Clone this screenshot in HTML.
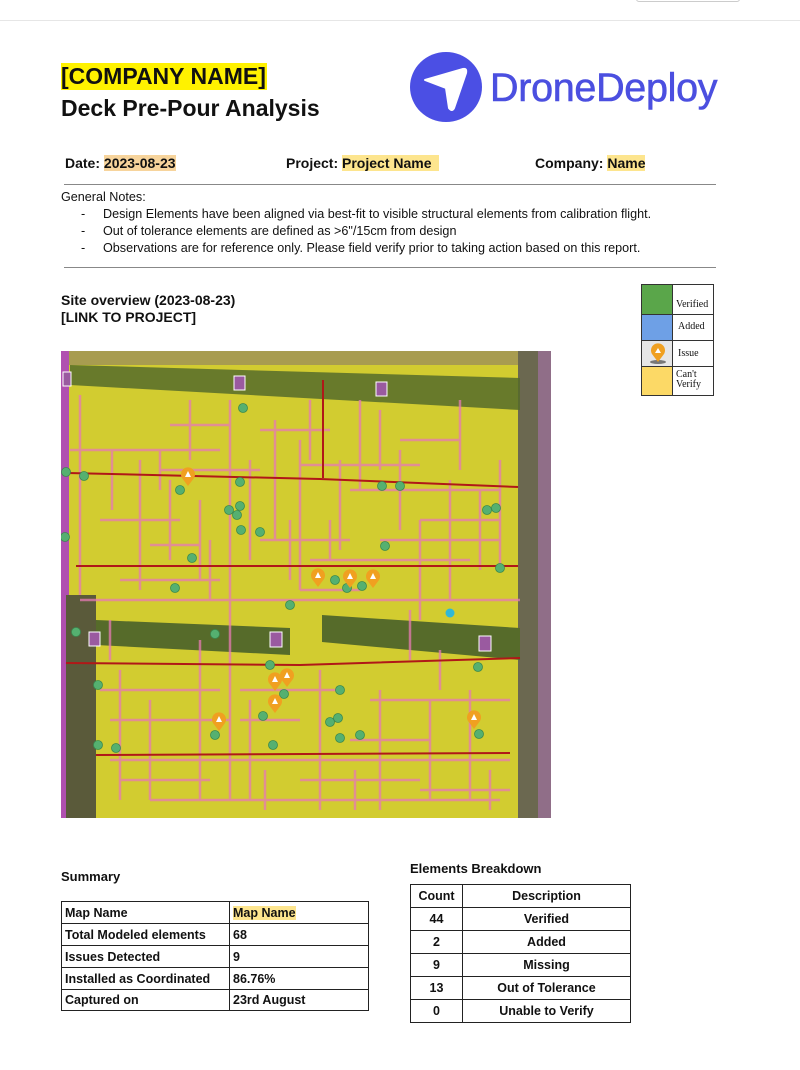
<!DOCTYPE html>
<html><head><meta charset="utf-8"><style>
*{margin:0;padding:0;box-sizing:border-box}
body{width:800px;height:1070px;background:#fff;position:relative;font-family:"Liberation Sans",Arial,sans-serif;color:#111;overflow:hidden}
.a{position:absolute;white-space:nowrap}
.hl{background:#fde58e}
table{border-collapse:collapse;position:absolute;font-weight:bold;font-size:12.5px}
td{border:1px solid #222;padding:0 3px}
</style></head><body>
<div class="a" style="left:0;top:20px;width:800px;border-top:1px solid #e6e6e6"></div>
<div class="a" style="left:636px;top:-6px;width:104px;height:8px;border:1px solid #ccc;border-radius:3px"></div>

<div class="a" style="left:61px;top:63px;height:27px;background:#fff200;font-size:23px;font-weight:bold;line-height:27px;padding:0 1px 0 0">[COMPANY NAME]</div>
<div class="a" style="left:61px;top:94px;font-size:23px;font-weight:bold;line-height:28px">Deck Pre-Pour Analysis</div>

<svg class="a" style="left:408px;top:50px" width="76" height="74" viewBox="0 0 76 74">
<ellipse cx="38" cy="37" rx="36" ry="35" fill="#4b4fe4"/>
<path d="M17 30 L55 19 Q59 18 58 23 L46 58 Q44 62 41 58 L38 38 Z" fill="#fff" stroke="#fff" stroke-width="2" stroke-linejoin="round"/>
</svg>
<div class="a" style="left:490px;top:65px;font-size:39.5px;color:#4b4fe0;line-height:46px;letter-spacing:-0.3px;-webkit-text-stroke:0.6px #4b4fe0">DroneDeploy</div>

<div class="a" style="left:65px;top:155px;font-size:14px;font-weight:bold">Date: <span style="background:#f7d49c">2023-08-23</span></div>
<div class="a" style="left:286px;top:155px;font-size:14px;font-weight:bold">Project: <span class="hl">Project Name&nbsp;&nbsp;</span></div>
<div class="a" style="left:535px;top:155px;font-size:14px;font-weight:bold">Company: <span class="hl">Name</span></div>
<div class="a" style="left:64px;top:184px;width:652px;border-top:1px solid #888"></div>
<div class="a" style="left:61px;top:189px;font-size:12.6px;line-height:17px">General Notes:</div>
<div class="a" style="left:81px;top:206px;font-size:12.6px;line-height:17px">-</div>
<div class="a" style="left:81px;top:223px;font-size:12.6px;line-height:17px">-</div>
<div class="a" style="left:81px;top:240px;font-size:12.6px;line-height:17px">-</div>
<div class="a" style="left:103px;top:206px;font-size:12.6px;line-height:17px">Design Elements have been aligned via best-fit to visible structural elements from calibration flight.<br>Out of tolerance elements are defined as &gt;6"/15cm from design<br>Observations are for reference only. Please field verify prior to taking action based on this report.</div>
<div class="a" style="left:64px;top:267px;width:652px;border-top:1px solid #888"></div>

<div class="a" style="left:61px;top:292px;font-size:14px;font-weight:bold;line-height:17px">Site overview (2023-08-23)<br>[LINK TO PROJECT]</div>

<div class="a" style="left:641px;top:284px;width:73px;height:112px;border:1px solid #333;font-family:'Liberation Serif',serif;font-size:10px">
<div class="a" style="left:0;top:0;width:31px;height:30px;background:#5aa64a;border-right:1px solid #333;border-bottom:1px solid #333"></div>
<div class="a" style="left:34px;top:14px">Verified</div>
<div class="a" style="left:31px;top:29px;width:41px;border-top:1px solid #333"></div>
<div class="a" style="left:0;top:30px;width:31px;height:26px;background:#6ea0e6;border-right:1px solid #333;border-bottom:1px solid #333"></div>
<div class="a" style="left:36px;top:36px">Added</div>
<div class="a" style="left:31px;top:55px;width:41px;border-top:1px solid #333"></div>
<div class="a" style="left:0;top:56px;width:31px;height:26px;background:#e6e6e6;border-right:1px solid #333;border-bottom:1px solid #333"><svg width="31" height="26"><ellipse cx="16" cy="21" rx="8" ry="2" fill="#777"/><path d="M16 21 L10 13 A7 7 0 1 1 22 13 Z" fill="#f0a020"/><path d="M13 12 L16 7 L19 12Z" fill="#fff"/></svg></div>
<div class="a" style="left:36px;top:63px">Issue</div>
<div class="a" style="left:31px;top:81px;width:41px;border-top:1px solid #333"></div>
<div class="a" style="left:0;top:82px;width:31px;height:28px;background:#fcd966;border-right:1px solid #333"></div>
<div class="a" style="left:34px;top:85px;line-height:10px">Can't<br>Verify</div>
</div>

<svg class="a" style="left:61px;top:351px" width="490" height="467" viewBox="61 351 490 467">
<rect x="61" y="351" width="490" height="467" fill="#d2cc30"/>
<rect x="61" y="351" width="490" height="14" fill="#a89c50"/>
<rect x="518" y="351" width="33" height="467" fill="#6b6850"/>
<rect x="538" y="351" width="13" height="467" fill="#a070a0" opacity=".7"/>
<rect x="61" y="351" width="8" height="467" fill="#b050b0"/>
<rect x="66" y="595" width="30" height="223" fill="#5a5a3a"/>
<polygon points="70,365 520,378 520,410 70,385" fill="#566b2a" opacity=".85"/>
<polygon points="96,620 290,628 290,655 96,645" fill="#566b2a"/>
<polygon points="322,615 520,628 520,660 322,642" fill="#566b2a"/>
<g stroke="#e67ab4" stroke-width="2.5" fill="none" opacity=".75">
<path d="M80 395v200M112 450v60M140 460v130M170 480v80M200 500v80M230 400v400M250 460v100M275 420v120M300 440v150M340 460v90M360 400v90M400 450v80M420 520v100M450 480v120M480 490v80M500 460v110M120 670v130M150 700v100M200 640v160M250 700v100M320 670v140M380 690v120M430 700v100M470 690v110M160 450v40M190 400v60M210 540v60M290 520v60M310 400v60M330 520v40M380 410v60M460 400v70M440 650v40M110 620v40M410 610v50M265 770v40M355 770v40M490 770v40"/>
<path d="M70 450h150M160 470h100M300 465h120M350 490h150M100 520h80M260 540h90M380 540h120M80 600h440M120 580h100M310 560h160M100 690h120M240 690h100M370 700h140M110 760h400M150 800h350M110 720h120M420 790h90M170 425h60M260 430h70M400 440h60M420 520h80M150 545h50M300 590h60M400 600h90M240 720h60M350 740h80M120 780h90M300 780h120"/>
</g>
<g stroke="#b01818" stroke-width="2" fill="none">
<path d="M68 473 L320 479 L518 487"/><path d="M76 566 L518 566"/><path d="M66 663 L300 665 L520 658"/><path d="M96 755 L510 753"/><path d="M323 380 L323 478"/>
</g>
<g fill="#9a5aa0" stroke="#fff" stroke-width="1">
<rect x="234" y="376" width="11" height="14"/><rect x="376" y="382" width="11" height="14"/><rect x="89" y="632" width="11" height="14"/><rect x="270" y="632" width="12" height="15"/><rect x="479" y="636" width="12" height="15"/><rect x="63" y="372" width="8" height="14"/>
</g>
<g fill="#55b070" stroke="#3a8a50" stroke-width=".8">
<circle cx="243" cy="408" r="4.5"/><circle cx="66" cy="472" r="4.5"/><circle cx="84" cy="476" r="4.5"/><circle cx="180" cy="490" r="4.5"/><circle cx="240" cy="482" r="4.5"/><circle cx="229" cy="510" r="4.5"/><circle cx="240" cy="506" r="4.5"/><circle cx="237" cy="515" r="4.5"/><circle cx="241" cy="530" r="4.5"/><circle cx="260" cy="532" r="4.5"/><circle cx="192" cy="558" r="4.5"/><circle cx="175" cy="588" r="4.5"/><circle cx="65" cy="537" r="4.5"/><circle cx="385" cy="546" r="4.5"/><circle cx="382" cy="486" r="4.5"/><circle cx="400" cy="486" r="4.5"/><circle cx="487" cy="510" r="4.5"/><circle cx="496" cy="508" r="4.5"/><circle cx="500" cy="568" r="4.5"/><circle cx="347" cy="588" r="4.5"/><circle cx="76" cy="632" r="4.5"/><circle cx="215" cy="634" r="4.5"/><circle cx="270" cy="665" r="4.5"/><circle cx="478" cy="667" r="4.5"/><circle cx="98" cy="745" r="4.5"/><circle cx="116" cy="748" r="4.5"/><circle cx="215" cy="735" r="4.5"/><circle cx="263" cy="716" r="4.5"/><circle cx="273" cy="745" r="4.5"/><circle cx="98" cy="685" r="4.5"/><circle cx="284" cy="694" r="4.5"/><circle cx="330" cy="722" r="4.5"/><circle cx="338" cy="718" r="4.5"/><circle cx="340" cy="738" r="4.5"/><circle cx="360" cy="735" r="4.5"/><circle cx="340" cy="690" r="4.5"/><circle cx="479" cy="734" r="4.5"/><circle cx="290" cy="605" r="4.5"/><circle cx="335" cy="580" r="4.5"/><circle cx="362" cy="586" r="4.5"/>
</g>
<circle cx="450" cy="613" r="4.5" fill="#30b8d8"/>
<g>
<g transform="translate(188,475)"><path d="M0 11 L-6 3 A7 7 0 1 1 6 3 Z" fill="#f0a020"/><path d="M-3 2 L0 -4 L3 2Z" fill="#fff"/></g>
<g transform="translate(318,576)"><path d="M0 11 L-6 3 A7 7 0 1 1 6 3 Z" fill="#f0a020"/><path d="M-3 2 L0 -4 L3 2Z" fill="#fff"/></g>
<g transform="translate(350,577)"><path d="M0 11 L-6 3 A7 7 0 1 1 6 3 Z" fill="#f0a020"/><path d="M-3 2 L0 -4 L3 2Z" fill="#fff"/></g>
<g transform="translate(373,577)"><path d="M0 11 L-6 3 A7 7 0 1 1 6 3 Z" fill="#f0a020"/><path d="M-3 2 L0 -4 L3 2Z" fill="#fff"/></g>
<g transform="translate(275,680)"><path d="M0 11 L-6 3 A7 7 0 1 1 6 3 Z" fill="#f0a020"/><path d="M-3 2 L0 -4 L3 2Z" fill="#fff"/></g>
<g transform="translate(287,676)"><path d="M0 11 L-6 3 A7 7 0 1 1 6 3 Z" fill="#f0a020"/><path d="M-3 2 L0 -4 L3 2Z" fill="#fff"/></g>
<g transform="translate(275,702)"><path d="M0 11 L-6 3 A7 7 0 1 1 6 3 Z" fill="#f0a020"/><path d="M-3 2 L0 -4 L3 2Z" fill="#fff"/></g>
<g transform="translate(219,720)"><path d="M0 11 L-6 3 A7 7 0 1 1 6 3 Z" fill="#f0a020"/><path d="M-3 2 L0 -4 L3 2Z" fill="#fff"/></g>
<g transform="translate(474,718)"><path d="M0 11 L-6 3 A7 7 0 1 1 6 3 Z" fill="#f0a020"/><path d="M-3 2 L0 -4 L3 2Z" fill="#fff"/></g>
</g>
</svg>

<div class="a" style="left:61px;top:869px;font-size:13px;font-weight:bold">Summary</div>
<table style="left:61px;top:901px;width:308px">
<tr style="height:22px"><td style="width:168px">Map Name</td><td><span class="hl">Map Name</span></td></tr>
<tr style="height:22px"><td>Total Modeled elements</td><td>68</td></tr>
<tr style="height:22px"><td>Issues Detected</td><td>9</td></tr>
<tr style="height:22px"><td>Installed as Coordinated</td><td>86.76%</td></tr>
<tr style="height:21px"><td>Captured on</td><td>23rd August</td></tr>
</table>

<div class="a" style="left:410px;top:861px;font-size:13px;font-weight:bold">Elements Breakdown</div>
<table style="left:410px;top:884px;width:221px;text-align:center">
<tr style="height:23px"><td style="width:52px">Count</td><td>Description</td></tr>
<tr style="height:23px"><td>44</td><td>Verified</td></tr>
<tr style="height:23px"><td>2</td><td>Added</td></tr>
<tr style="height:23px"><td>9</td><td>Missing</td></tr>
<tr style="height:23px"><td>13</td><td>Out of Tolerance</td></tr>
<tr style="height:23px"><td>0</td><td>Unable to Verify</td></tr>
</table>
</body></html>
